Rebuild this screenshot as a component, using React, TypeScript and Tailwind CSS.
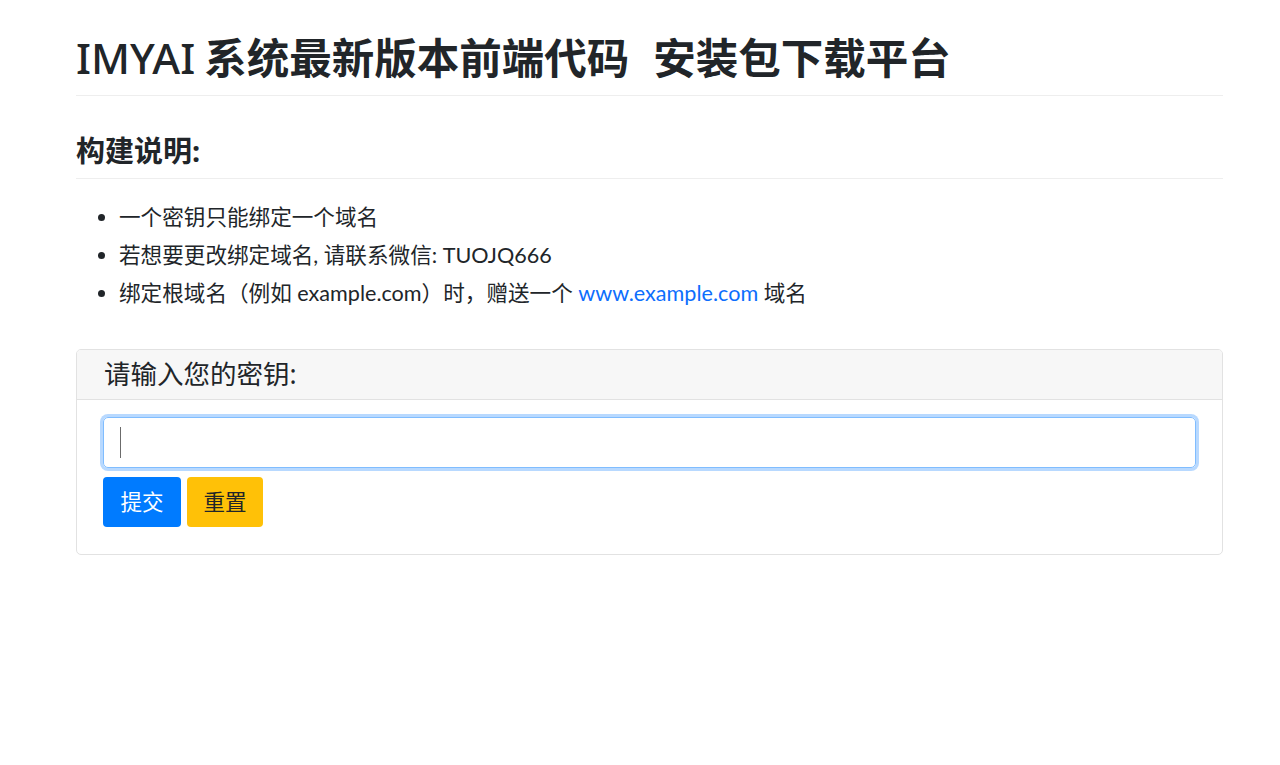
import React from "react";

const font = "font-['Noto_Sans','Noto_Sans_CJK_SC',sans-serif]";

export default function App() {
    return (
        <div className={`min-h-[765px] bg-white text-[#212529] ${font}`}>
            <div className="ml-[76px] w-[1147px] pt-[33px]">
                {/* Title */}
                <h1 className="text-[42.5px] leading-[50px] pb-[12px] border-b border-[#eeeeee]">
                    <span className="font-medium">IMYAI</span>
                    <span className="font-bold ml-[9px]">系统最新版本前端代码</span>
                    <span className="font-bold ml-[24px]">安装包下载平台</span>
                </h1>

                {/* Build notes */}
                <h2 className="mt-[38px] text-[29px] leading-[34px] font-bold pb-[10px] border-b border-[#eeeeee]">
                    构建说明:
                </h2>
                <ul className="mt-[19px] list-disc pl-[43px] text-[21.6px] leading-[38px] font-['Lato','Noto_Sans_CJK_SC',sans-serif]">
                    <li>一个密钥只能绑定一个域名</li>
                    <li>若想要更改绑定域名, 请联系微信: TUOJQ666</li>
                    <li>
                        绑定根域名（例如 example.com）时，赠送一个{" "}
                        <a href="#" className="text-[#0d6efd]">www.example.com</a> 域名
                    </li>
                </ul>

                {/* Key card */}
                <div className="mt-[37px] border border-[#e2e2e2] rounded-[5px] overflow-hidden">
                    <div className="h-[50px] bg-[#f7f7f7] border-b border-[#e2e2e2] pl-[27px] flex items-center text-[26.5px]">
                        请输入您的密钥:
                    </div>
                    <div className="pt-[17px] px-[26px] pb-[27px]">
                        <div className="relative">
                            <input
                                type="text"
                                className="w-full h-[51px] border border-[#80bdff] rounded-[5px] outline-none ring-[3px] ring-[#b8d9ff] px-[16px] text-[21px] caret-transparent"
                            />
                            <span className="absolute left-[17px] top-[10px] w-px h-[31px] bg-[#6b6b6b]" />
                        </div>
                        <div className="mt-[9px] flex gap-[6px]">
                            <button className="w-[78px] h-[50px] rounded-[4px] bg-[#007bff] text-white text-[21.5px]">
                                提交
                            </button>
                            <button className="w-[76px] h-[50px] rounded-[4px] bg-[#ffc107] text-[#212529] text-[21.5px]">
                                重置
                            </button>
                        </div>
                    </div>
                </div>
            </div>
        </div>
    );
}
